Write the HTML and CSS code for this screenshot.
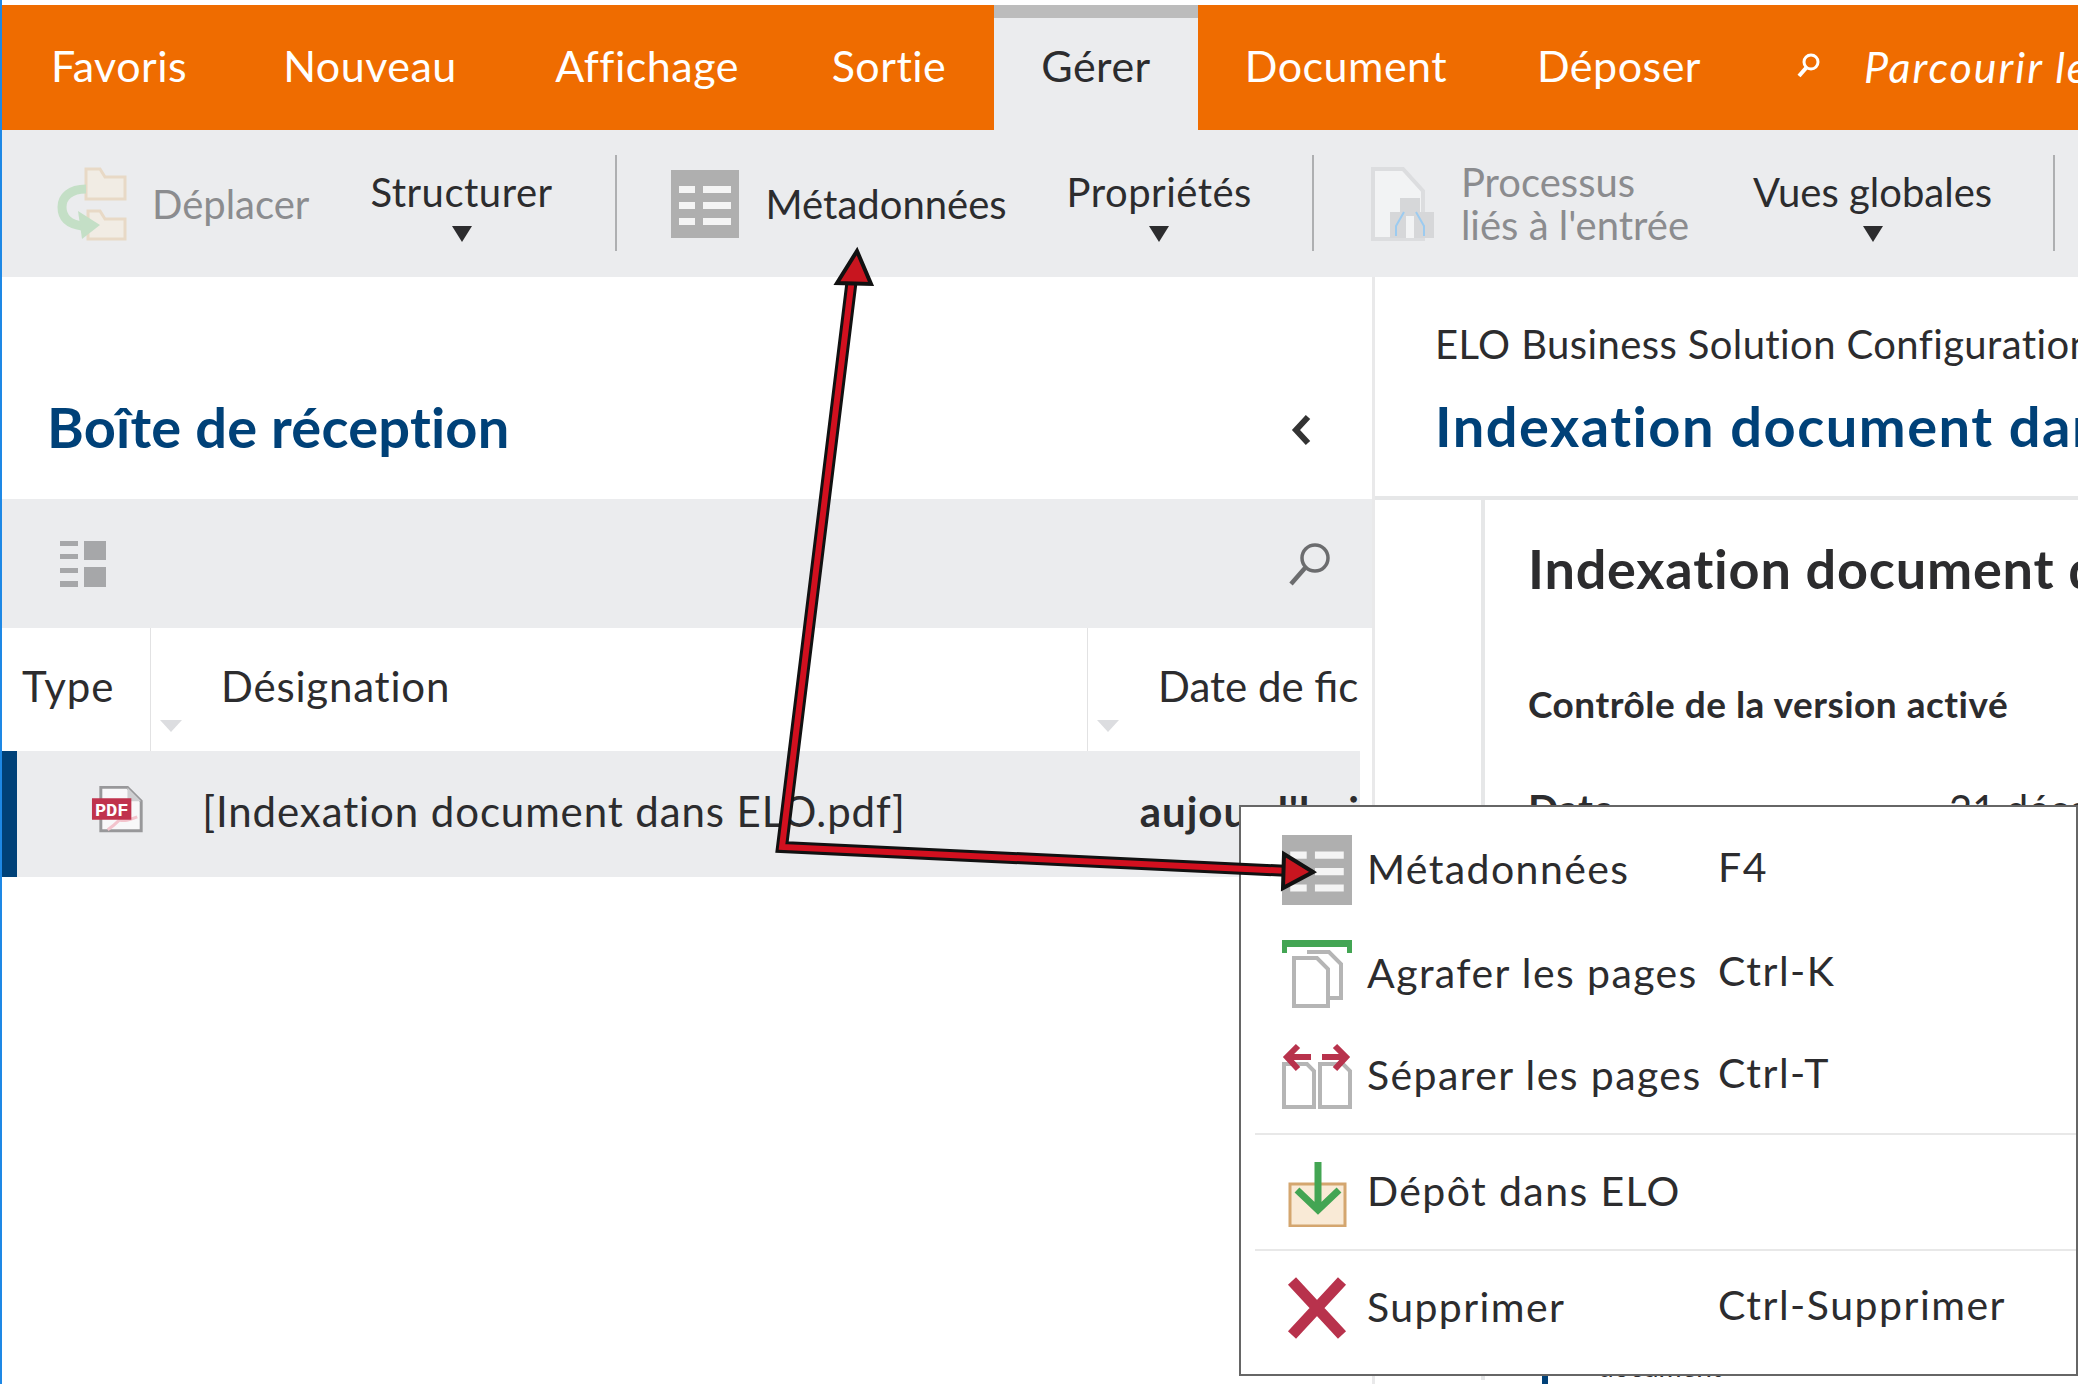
FILE: index.html
```html
<!DOCTYPE html>
<html lang="fr">
<head>
  <meta charset="UTF-8" />
  <title>ELO - Gérer</title>
  <link rel="stylesheet" href="styles.css">
</head>
<body>
  <div class="app">

    <nav class="tabs">
      <div class="tab">Favoris</div>
      <div class="tab">Nouveau</div>
      <div class="tab">Affichage</div>
      <div class="tab">Sortie</div>
      <div class="tab active">Gérer</div>
      <div class="tab">Document</div>
      <div class="tab">Déposer</div>
      <div class="search">
        <svg width="28" height="30" viewBox="0 0 28 30"><circle cx="16" cy="11" r="7" fill="none" stroke="#fff" stroke-width="3"/><path d="M11 17 4 25" stroke="#fff" stroke-width="4"/></svg>
        <span>Parcourir le</span>
      </div>
    </nav>

    <div class="ribbon">
      <div class="tool off t-move">
        <svg width="72" height="78" viewBox="0 0 72 78">
          <path d="M30 4h14l5 8h20v22H30z" fill="#f1ece4" stroke="#e8d9c6" stroke-width="3"/>
          <path d="M32 46h12l5 8h20v20H32z" fill="#f1ece4" stroke="#e8d9c6" stroke-width="3"/>
          <path d="M30 24C14 24 6 32 6 42c0 10 6 17 20 19" fill="none" stroke="#c4dfc6" stroke-width="9"/>
          <path d="M22 46 44 60 26 74z" fill="#c4dfc6"/>
        </svg>
        <span>Déplacer</span>
      </div>
      <div class="tool drop t-struct">Structurer<i class="caret"></i></div>
      <div class="sep s-1"></div>
      <div class="tool t-meta">
        <svg class="meta-icon" width="68" height="68" viewBox="0 0 68 68"><use href="#meta"/></svg>
        <span>Métadonnées</span>
      </div>
      <div class="tool drop t-prop">Propriétés<i class="caret"></i></div>
      <div class="sep s-2"></div>
      <div class="tool off t-proc">
        <svg width="64" height="76" viewBox="0 0 64 76">
          <path d="M3 3h30l20 22v48H3z" fill="#f2f3f4" stroke="#dcdddf" stroke-width="4"/>
          <path d="M30 32h20v14h14v26H44V60H38v12H20V46h10z" fill="#d6d7d9"/>
          <path d="M34 46 26 60v10M46 46l8 14v10" fill="none" stroke="#9ccbf0" stroke-width="2"/>
          <path d="M36 50h8v22h-8z" fill="#f2f3f4"/>
        </svg>
        <span class="two-lines">Processus<br>liés à l'entrée</span>
      </div>
      <div class="tool drop t-views">Vues globales<i class="caret"></i></div>
      <div class="sep s-3"></div>
    </div>

    <main class="split">
      <section class="left">
        <div class="panel-head">
          <h1 class="blue-title">Boîte de réception</h1>
          <svg class="chevron" width="22" height="36" viewBox="0 0 22 36"><path d="M18 5 6 18l12 13" fill="none" stroke="#333" stroke-width="6"/></svg>
        </div>
        <div class="list-tools">
          <svg width="46" height="46" viewBox="0 0 46 46" fill="#a6a7a9">
            <path d="M0 0h18v5H0zM0 13h18v5H0zM0 27h18v5H0zM0 40h18v6H0zM24 0h22v19H24zM24 26h22v20H24z"/>
          </svg>
          <svg width="48" height="48" viewBox="0 0 48 48"><circle cx="29" cy="18" r="13" fill="none" stroke="#6b6c6e" stroke-width="3.5"/><path d="M19 28 5 44" stroke="#6b6c6e" stroke-width="4.5"/></svg>
        </div>
        <div class="list-head">
          <div class="col c-type">Type</div>
          <div class="col c-name">Désignation</div>
          <div class="col c-date">Date de fic</div>
        </div>
        <div class="list-row">
          <svg class="pdf" width="54" height="50" viewBox="0 0 54 50">
            <path d="M11 1h27l14 14v30H11z" fill="#f8f8f9" stroke="#98989a" stroke-width="3"/>
            <path d="M38 1v14h14z" fill="#cfcfd1"/>
            <path d="M18 44c6-4 10-8 12-10 4 2 10 0 18-3" fill="none" stroke="#f3c4cd" stroke-width="3"/>
            <path d="M2 12h40v22H2z" fill="#c0334d"/>
            <text x="5" y="30" textLength="34" class="pdf-label">PDF</text>
          </svg>
          <span class="row-name">[Indexation document dans ELO.pdf]</span>
          <b class="row-date">aujourd'hui</b>
        </div>
      </section>

      <section class="right">
        <div class="doc-head">
          <div class="crumb">ELO Business Solution Configuration</div>
          <h1 class="blue-title">Indexation document dans ELO</h1>
        </div>
        <div class="doc-body">
          <div class="doc-content">
            <h2>Indexation document dans ELO</h2>
            <h3>Contrôle de la version activé</h3>
            <div class="field"><b>Date</b><span>21 décembre</span></div>
            <div class="doc-foot">document</div>
          </div>
        </div>
      </section>
    </main>

    <div class="menu">
      <div class="item">
        <svg width="70" height="70" viewBox="0 0 70 70"><use href="#meta"/></svg>
        <span class="label">Métadonnées</span><span class="key">F4</span>
      </div>
      <div class="item i-2">
        <svg width="70" height="68" viewBox="0 0 70 68">
          <path d="M0 0h70v13h-5V7H5v6H0z" fill="#43a553"/>
          <path d="M25 12h22l12 12v34H46" fill="none" stroke="#b5b5b5" stroke-width="4"/>
          <path d="M12 18h23l11 11v37H12z" fill="#fff" stroke="#b5b5b5" stroke-width="4"/>
        </svg>
        <span class="label">Agrafer les pages</span><span class="key">Ctrl-K</span>
      </div>
      <div class="item i-3">
        <svg width="70" height="68" viewBox="0 0 70 68">
          <path d="M2 22h23l7 7v36H2zM38 22h23l7 7v36H38z" fill="#fff" stroke="#b5b5b5" stroke-width="4"/>
          <path d="M29 15H6M16 4 5 15l11 12M40 15h23M53 4l11 11-11 12" fill="none" stroke="#b8324c" stroke-width="6"/>
        </svg>
        <span class="label">Séparer les pages</span><span class="key">Ctrl-T</span>
      </div>
      <div class="rule"></div>
      <div class="item i-4">
        <svg width="70" height="70" viewBox="0 0 70 70">
          <path d="M8 27h55v42H8z" fill="#f9ead6" stroke="#d4a66f" stroke-width="3"/>
          <path d="M36 5v48M15 33l21 20 21-20" fill="none" stroke="#43a553" stroke-width="7"/>
        </svg>
        <span class="label">Dépôt dans ELO</span>
      </div>
      <div class="rule"></div>
      <div class="item i-5">
        <svg width="70" height="62" viewBox="0 0 70 62"><path d="M10 4l50 54M60 4 10 58" stroke="#b8324c" stroke-width="11"/></svg>
        <span class="label">Supprimer</span><span class="key">Ctrl-Supprimer</span>
      </div>
    </div>

    <svg class="arrows" width="2078" height="1384" viewBox="0 0 2078 1384">
      <path d="M853 270 782 847 1290 871" fill="none" stroke="#111" stroke-width="12" stroke-linejoin="miter"/>
      <path d="M853 270 782 847 1290 871" fill="none" stroke="#d2101f" stroke-width="6" stroke-linejoin="miter"/>
      <path d="M857 251 871 284 837 283z" fill="#c8151f" stroke="#111" stroke-width="4"/>
      <path d="M1313 872 1284 854 1283 888z" fill="#c8151f" stroke="#111" stroke-width="4"/>
    </svg>

    <svg class="defs" width="0" height="0">
      <symbol id="meta" viewBox="0 0 68 68">
        <path d="M0 0h68v68H0z" fill="#afafaf"/>
        <path d="M8 16h16v7H8zM32 16h28v7H32zM8 32h16v7H8zM32 32h28v7H32zM8 48h16v7H8zM32 48h28v7H32z" fill="#f4f4f4"/>
      </symbol>
    </svg>
  </div>
</body>
</html>
```

FILE: styles.css
```css
html, body {
  margin: 0;
  height: 100%;
  overflow: hidden;
  background-color: white;
}

body {
  font-family: Lato, "Noto Sans", sans-serif;
  color: #2c2c2e;
}

.app {
  position: relative;
  width: 2078px;
  height: 1384px;
  padding-top: 5px;
  box-sizing: border-box;
  border-left: 2px solid #1e88e5;
  overflow: hidden;
}

/* Onglets */
.tabs {
  display: flex;
  height: 125px;
  background-color: #ef6c00;
  color: white;
  font-size: 43px;
  letter-spacing: 0.5px;
  white-space: nowrap;
}

.tab {
  flex: none;
  box-sizing: border-box;
  text-align: center;
  line-height: 122px;
}

.tab:nth-child(1) { width: 234px; }
.tab:nth-child(2) { width: 268px; }
.tab:nth-child(3) { width: 286px; }
.tab:nth-child(4) { width: 204px; padding-right: 6px; }
.tab:nth-child(5) { width: 204px; }
.tab:nth-child(6) { width: 296px; }
.tab:nth-child(7) { width: 250px; }

.tab.active {
  background-color: #ebecee;
  color: #2c2c2e;
  border-top: 13px solid #bcbcbc;
  line-height: 96px;
}

.search {
  display: flex;
  flex: none;
  align-items: center;
  gap: 41px;
  margin-left: 51px;
  height: 122px;
  font-style: italic;
  letter-spacing: 2px;
}

/* Barre d'outils */
.ribbon {
  display: flex;
  height: 147px;
  background-color: #ebecee;
  font-size: 40px;
  white-space: nowrap;
}

.tool {
  display: flex;
  align-items: center;
  height: 147px;
}

.tool.off {
  color: #8b8c8f;
}

.tool.drop {
  flex-direction: column;
  justify-content: flex-start;
  padding-top: 38px;
  box-sizing: border-box;
}

.caret {
  margin-top: 10px;
  border-left: 10px solid transparent;
  border-right: 10px solid transparent;
  border-top: 16px solid #2c2c2e;
}

.sep {
  width: 2px;
  height: 96px;
  margin-top: 25px;
  background-color: #aeafb1;
}

.t-move { margin-left: 54px; gap: 24px; }
.t-struct { margin-left: 61px; letter-spacing: 0.5px; }
.s-1 { margin-left: 62px; }
.t-meta { margin-left: 54px; gap: 27px; }
.t-prop { margin-left: 60px; letter-spacing: 0.5px; }
.s-2 { margin-left: 60px; }
.t-proc { margin-left: 56px; gap: 27px; }
.t-views { margin-left: 64px; }
.s-3 { margin-left: 61px; }

.two-lines {
  line-height: 43px;
}

/* Panneaux */
.split {
  display: flex;
  height: 1107px;
}

.left {
  width: 1370px;
  flex: none;
  border-right: 3px solid #e9e9ea;
}

.blue-title {
  margin: 0;
  color: #004178;
  font-size: 56px;
  font-weight: 700;
  white-space: nowrap;
}

.panel-head {
  display: flex;
  align-items: center;
  justify-content: space-between;
  height: 222px;
  padding: 76px 60px 0 45px;
  box-sizing: border-box;
}

.panel-head .blue-title {
  letter-spacing: 0.2px;
}

.chevron {
  margin-top: 8px;
}

.list-tools {
  display: flex;
  align-items: center;
  justify-content: space-between;
  height: 129px;
  padding: 0 38px 0 58px;
  background-color: #ebecee;
}

.list-head {
  display: flex;
  height: 123px;
  font-size: 42px;
  line-height: 117px;
  margin-right: 12px;
}

.col {
  position: relative;
  white-space: nowrap;
}

.c-type { width: 128px; padding-left: 20px; letter-spacing: 1px; border-right: 1px solid #e2e2e3; }
.c-name { width: 866px; padding-left: 70px; letter-spacing: 0.8px; border-right: 1px solid #e2e2e3; }
.c-date { padding-left: 70px; overflow: hidden; flex: 1; }

.c-type::after,
.c-name::after {
  content: "";
  position: absolute;
  right: -32px;
  top: 92px;
  border-left: 11px solid transparent;
  border-right: 11px solid transparent;
  border-top: 12px solid #dcdde0;
}

.list-row {
  display: flex;
  align-items: center;
  height: 126px;
  padding-bottom: 6px;
  margin-right: 12px;
  background-color: #ebecee;
  border-left: 15px solid #004178;
  box-sizing: border-box;
  font-size: 42px;
  white-space: nowrap;
}

.pdf { margin-left: 73px; }
.row-name { margin-left: 59px; letter-spacing: 0.9px; }
.row-date { margin-left: 234px; letter-spacing: 1px; }

.pdf-label {
  font-family: "Liberation Mono", monospace;
  font-size: 19px;
  font-weight: 700;
  fill: white;
}

.right {
  flex: 1;
  min-width: 0;
}

.doc-head {
  height: 223px;
  padding-left: 60px;
  box-sizing: border-box;
  border-bottom: 4px solid #e6e7e8;
  white-space: nowrap;
}

.doc-head .blue-title {
  letter-spacing: 1.5px;
}

.crumb {
  padding-top: 38px;
  font-size: 40px;
  letter-spacing: 0.4px;
  line-height: 58px;
  margin-bottom: 19px;
}

.doc-body {
  height: 880px;
  padding-left: 106px;
}

.doc-content {
  height: 100%;
  padding-left: 43px;
  border-left: 4px solid #e6e7e8;
  white-space: nowrap;
}

.doc-content h2 {
  margin: 0;
  padding-top: 38px;
  font-size: 54px;
  letter-spacing: 0.8px;
  line-height: 62px;
  font-weight: 700;
}

.doc-content h3 {
  margin: 81px 0 0;
  font-size: 37px;
  letter-spacing: 0.5px;
  line-height: 46px;
  font-weight: 700;
}

.field {
  display: flex;
  margin-top: 57px;
  font-size: 40px;
  line-height: 50px;
}

.field span {
  margin-left: 335px;
}

.doc-foot {
  margin: 512px 0 0 14px;
  padding: 0 0 40px 50px;
  border-left: 6px solid #004178;
  font-size: 28px;
  line-height: 40px;
}

/* Menu contextuel */
.menu {
  position: absolute;
  left: 1237px;
  top: 805px;
  width: 839px;
  height: 571px;
  box-sizing: border-box;
  background-color: white;
  border: 2px solid #666;
  padding: 21px 0 0 14px;
  font-size: 41px;
  letter-spacing: 1.4px;
  white-space: nowrap;
}

.item {
  position: relative;
  display: flex;
  align-items: center;
  height: 84px;
  padding-left: 27px;
}

.item svg {
  flex: none;
  width: 70px;
}

.label {
  width: 351px;
  margin: -3px 0 0 15px;
}

.key {
  margin-top: -8px;
  letter-spacing: 1.5px;
}

.i-2 { margin-top: 20px; }
.i-3 { margin-top: 18px; }
.i-4 { margin-top: 15px; }
.i-5 { margin-top: 15px; }

.rule {
  height: 2px;
  margin-top: 15px;
  background-color: #e8e8e8;
}

/* Flèches d'annotation */
.arrows {
  position: absolute;
  left: -2px;
  top: 0;
}

.defs {
  position: absolute;
}
```
